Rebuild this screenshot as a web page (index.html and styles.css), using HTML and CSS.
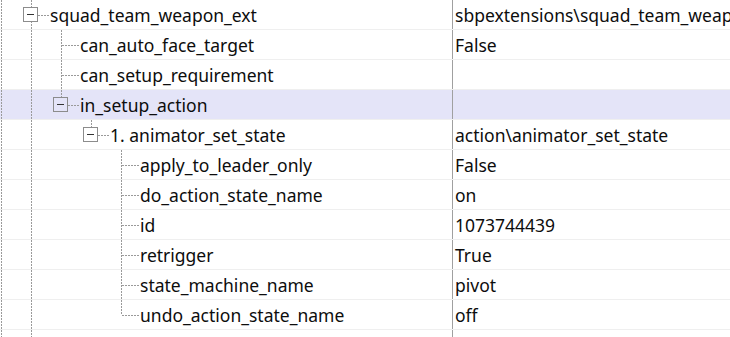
FILE: index.html
```html
<!DOCTYPE html>
<html lang="en">
<head>
  <meta charset="UTF-8" />
  <title>Property Tree</title>
  <link rel="stylesheet" href="styles.css">
</head>
<body>

  <!-- Property tree -->
  <div class="tree">

    <div class="row">
      <div class="name">
        <span class="g v"></span>
        <span class="g own v h"><i class="box"></i></span>
        <span class="label">squad_team_weapon_ext</span>
      </div>
      <div class="value">sbpextensions\squad_team_weapon_ext</div>
    </div>

    <div class="row">
      <div class="name">
        <span class="g v"></span>
        <span class="g v"></span>
        <span class="g own v h"></span>
        <span class="label">can_auto_face_target</span>
      </div>
      <div class="value">False</div>
    </div>

    <div class="row">
      <div class="name">
        <span class="g v"></span>
        <span class="g v"></span>
        <span class="g own v h"></span>
        <span class="label">can_setup_requirement</span>
      </div>
      <div class="value"></div>
    </div>

    <div class="row sel">
      <div class="name">
        <span class="g v"></span>
        <span class="g v"></span>
        <span class="g own v elbow h"><i class="box"></i></span>
        <span class="label">in_setup_action</span>
      </div>
      <div class="value"></div>
    </div>

    <div class="row">
      <div class="name">
        <span class="g v"></span>
        <span class="g v"></span>
        <span class="g"></span>
        <span class="g own v elbow h"><i class="box"></i></span>
        <span class="label">1. animator_set_state</span>
      </div>
      <div class="value">action\animator_set_state</div>
    </div>

    <div class="row">
      <div class="name">
        <span class="g v"></span>
        <span class="g v"></span>
        <span class="g"></span>
        <span class="g"></span>
        <span class="g own v h"></span>
        <span class="label">apply_to_leader_only</span>
      </div>
      <div class="value">False</div>
    </div>

    <div class="row">
      <div class="name">
        <span class="g v"></span>
        <span class="g v"></span>
        <span class="g"></span>
        <span class="g"></span>
        <span class="g own v h"></span>
        <span class="label">do_action_state_name</span>
      </div>
      <div class="value">on</div>
    </div>

    <div class="row">
      <div class="name">
        <span class="g v"></span>
        <span class="g v"></span>
        <span class="g"></span>
        <span class="g"></span>
        <span class="g own v h"></span>
        <span class="label">id</span>
      </div>
      <div class="value">1073744439</div>
    </div>

    <div class="row">
      <div class="name">
        <span class="g v"></span>
        <span class="g v"></span>
        <span class="g"></span>
        <span class="g"></span>
        <span class="g own v h"></span>
        <span class="label">retrigger</span>
      </div>
      <div class="value">True</div>
    </div>

    <div class="row">
      <div class="name">
        <span class="g v"></span>
        <span class="g v"></span>
        <span class="g"></span>
        <span class="g"></span>
        <span class="g own v h"></span>
        <span class="label">state_machine_name</span>
      </div>
      <div class="value">pivot</div>
    </div>

    <div class="row">
      <div class="name">
        <span class="g v"></span>
        <span class="g v"></span>
        <span class="g"></span>
        <span class="g"></span>
        <span class="g own v elbow h"></span>
        <span class="label">undo_action_state_name</span>
      </div>
      <div class="value">off</div>
    </div>

    <!-- next sibling, only its expander peeks into view -->
    <div class="row">
      <div class="name">
        <span class="g v"></span>
        <span class="g own v elbow"><i class="box"></i></span>
      </div>
      <div class="value"></div>
    </div>

  </div>

</body>
</html>
```

FILE: styles.css
```css
body {
  margin: 0;
  background: white;
  font-family: 'Noto Sans', 'Open Sans', sans-serif;
  font-size: 17.5px;
  color: #0d0d0d;
  height: 337px;
  overflow: hidden;
}

.tree {
  display: flex;
  flex-direction: column;
}

.row {
  display: flex;
  height: 30px;
  flex: none;
  box-sizing: border-box;
  border-bottom: 1px solid #efefef;
  background: white;
}

.row.sel {
  background: #e4e4f8;
}

.name {
  width: 453px;
  flex: none;
  display: flex;
  align-items: center;
  box-sizing: border-box;
  border-right: 1px solid #a0a0a0;
  white-space: nowrap;
  overflow: hidden;
}

.value {
  flex: 1;
  display: flex;
  align-items: center;
  padding-left: 2px;
  padding-top: 2px;
  white-space: nowrap;
  overflow: hidden;
  line-height: 1;
}

/* guide columns of the tree */
.g {
  position: relative;
  width: 30px;
  flex: none;
  align-self: stretch;
}

.g.own {
  width: 20px;
}

.v::before {
  content: "";
  position: absolute;
  left: 1px;
  top: 0;
  bottom: -1px;
  width: 1px;
  background: repeating-linear-gradient(to bottom, #9a9a9a 0 2px, transparent 2px 3px);
}

.elbow::before {
  bottom: 14px;
}

.h::after {
  content: "";
  position: absolute;
  left: 2px;
  top: 15px;
  width: 17px;
  height: 1px;
  background: repeating-linear-gradient(to right, #9a9a9a 0 2px, transparent 2px 3px);
}

.box {
  position: absolute;
  left: -7px;
  top: 7px;
  width: 15px;
  height: 15px;
  box-sizing: border-box;
  border: 1px solid #8c8c8c;
  background: white;
  z-index: 1;
}

.sel .box {
  background: #e4e4f8;
}

.box::after {
  content: "";
  position: absolute;
  left: 3px;
  top: 6px;
  width: 7px;
  height: 1px;
  background: #333;
}

.label {
  line-height: 1;
  padding-top: 2px;
}
```
